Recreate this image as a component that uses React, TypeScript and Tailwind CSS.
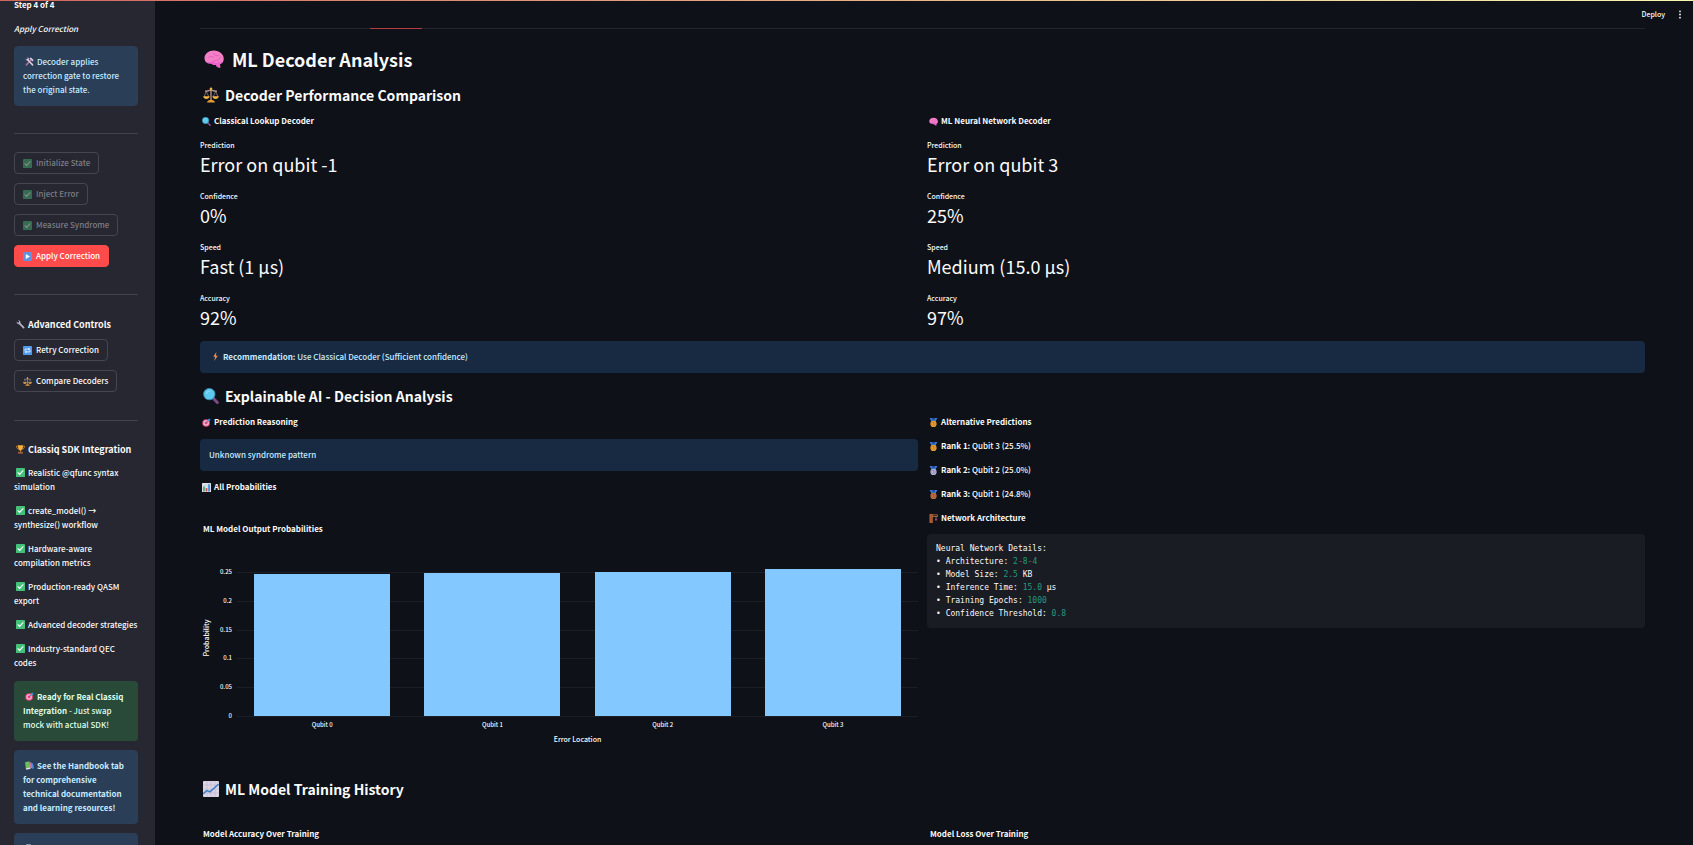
import React from 'react';

type IconName =
  | 'brain' | 'scales' | 'search' | 'target' | 'bars' | 'trend' | 'gold' | 'silver' | 'bronze'
  | 'crane' | 'bolt' | 'tools' | 'check' | 'play' | 'retry' | 'wrench' | 'trophy' | 'books' | 'file';

const medal = (fill: string, dark: string) => (
  <>
    <path d="M1 0h5l2 3 2-3h5l-4 7H5z" fill="#3b78d8" />
    <path d="M5 0h6L9 5H7z" fill="#1e4fa3" />
    <circle cx="8" cy="10.5" r="5.5" fill={fill} />
    <circle cx="8" cy="10.5" r="3.6" fill="none" stroke={dark} />
    <path d="M7 9l1.4-1v5" fill="none" stroke={dark} strokeWidth="1.2" />
  </>
);

const drawings: Record<IconName, React.ReactNode> = {
  brain: (
    <>
      <path d="M.4 7.600C.2 4 3.800 1.200 8 1.200c4.400 0 7.800 3 7.800 6.600 0 2.600-1.400 4-3 4.300l.2 2.900-2.600-.6-.8-1.800c-1.600.4-3 0-3.800-1C2.600 12 .6 10.600.4 7.600z" fill="#f57fc6" />
      <path d="M1.600 9.500c1.800 1.400 3.600 1.200 5 .4 2 1.200 5 1.200 8.200-.2-.5 1.500-1.400 2.200-2 2.400l.2 2.900-2.600-.6-.8-1.800c-1.600.4-3 0-3.800-1-1.800.1-3.600-.6-4.200-2.100z" fill="#ee62d2" />
      <path d="M3.500 7c1.500-1.600 3-1.400 4.200-.2M8 3.500c.4 1.700 2 2.400 3.600 1.700M7 10.500c.8-1.600 2.600-2 4.400-1.200M13.200 6.500c-.8.2-1.400 1-1.200 2" fill="none" stroke="#dc58b4" strokeWidth=".7" strokeLinecap="round" />
    </>
  ),
  scales: (
    <>
      <path d="M8 1v12M2 4.200C4 4.600 6 3.600 8 3c2 .6 4 1.600 6 1.200" fill="none" stroke="#b89a86" strokeWidth="1.300" />
      <path d="M3.200 4.500L1 10M3.200 4.500L6 10M12.800 4.500L10 10M12.800 4.500L15 10" stroke="#a08b90" strokeWidth=".7" />
      <path d="M.2 9.300h6.400C6.200 13 .6 13 .2 9.300zM9.400 9.300h6.400c-.4 3.700-6 3.700-6.400 0z" fill="#f5b445" />
      <path d="M4 15.500c.4-1.900 2-2.700 4-2.700s3.600.8 4 2.700z" fill="#e59a35" />
      <circle cx="8" cy="1.800" r="1.300" fill="#f5b445" />
    </>
  ),
  search: (
    <>
      <path d="M10.300 10.300l4 4.200" stroke="#7d4a86" strokeWidth="3" strokeLinecap="round" />
      <circle cx="6.300" cy="6.100" r="5.700" fill="#5cc8ee" stroke="#3b8fb3" strokeWidth=".8" />
      <path d="M3.500 5.500C4 3.800 5.300 3 7 3" stroke="#8fdcf8" strokeWidth="1.200" fill="none" strokeLinecap="round" />
    </>
  ),
  target: (
    <>
      <circle cx="7.300" cy="8.800" r="6.800" fill="#e8457c" />
      <circle cx="7.300" cy="8.800" r="4.700" fill="#f6d3e2" />
      <circle cx="7.300" cy="8.800" r="2.900" fill="#e8457c" />
      <path d="M7.500 8.500L13 3" stroke="#2f6fc4" strokeWidth="1.400" />
      <path d="M10.500 3L13 .5l.6 2 2 .6L13 5.600l-2.200-.4z" fill="#3f9bea" />
    </>
  ),
  bars: (
    <>
      <rect x="0" y="0" width="16" height="16" rx="1" fill="#dfe3ee" />
      <path d="M0 5.300h16M0 10.600h16M5.300 0v16M10.600 0v16" stroke="#b9bfd0" strokeWidth=".6" />
      <path d="M2 6h3v9H2z" fill="#35b26b" />
      <path d="M6.500 9h3v6h-3z" fill="#e0455a" />
      <path d="M11 2h3v13h-3z" fill="#3f86e0" />
    </>
  ),
  trend: (
    <>
      <rect x="0" y="0" width="16" height="16" rx="1" fill="#dcd5e6" />
      <path d="M0 4h16M0 8h16M0 12h16M4 0v16M8 0v16M12 0v16" stroke="#b8aecb" strokeWidth=".5" />
      <path d="M0 13l3.600-3.400 3.400 1.200L15.600 3" fill="none" stroke="#3f80c8" strokeWidth="1.600" />
    </>
  ),
  gold: medal('#f5a83c', '#b86a17'),
  silver: medal('#c3bfe0', '#77719d'),
  bronze: medal('#cf7a4d', '#8a4222'),
  crane: (
    <>
      <path d="M1 1h5v15H1z" fill="#7a4330" />
      <path d="M2 16V1h4v15M2 4l4 4-4 4 4 4M6 4L2 8l4 4-4 4" fill="none" stroke="#c8703c" strokeWidth="1.100" />
      <path d="M1 1.500h14v3H6" fill="none" stroke="#d9803f" strokeWidth="1.300" />
      <path d="M12.500 4.500v4" stroke="#b9aab4" />
      <path d="M10.500 8.500h4v3h-4z" fill="#a8485a" />
    </>
  ),
  bolt: <path d="M9.500 0L4 8.600h3.400L5.600 16 12.200 6.600H8.800z" fill="#f58a42" />,
  tools: (
    <>
      <path d="M2.500 14L11 4.500" stroke="#a9718f" strokeWidth="3" strokeLinecap="round" />
      <path d="M7.500 2.200L10.500.8l5 4.600-2.300 2.400z" fill="#cfc6d8" />
      <path d="M4.500 4.500L13.500 14" stroke="#d8cfe2" strokeWidth="2.600" strokeLinecap="round" />
      <path d="M1 2.500L3 4.600 5 4 5 1.500 3.200.6C5.500 0 7.500 2 6.800 4.800 5.500 7.200 1.500 6.500 1 2.500z" fill="#d8cfe2" />
    </>
  ),
  check: (
    <>
      <rect x="0" y="0" width="16" height="16" rx="1.500" fill="#45c07a" />
      <path d="M3.500 8.300l3 3.100 6-6.600" fill="none" stroke="#fff" strokeWidth="1.900" strokeLinecap="round" />
    </>
  ),
  play: (
    <>
      <rect x="0" y="0" width="16" height="16" rx="1.500" fill="#5f93e0" />
      <path d="M5 3.500v9L12.500 8z" fill="#fff" />
    </>
  ),
  retry: (
    <>
      <rect x="0" y="0" width="16" height="16" rx="1.500" fill="#4f9bf0" />
      <path d="M3.500 8.500V5.500H11M12.500 7.500v3H5" fill="none" stroke="#fff" strokeWidth="1.300" />
      <path d="M10 3l3 2.500L10 8zM6 8l-3 2.500L6 13z" fill="#fff" />
    </>
  ),
  wrench: (
    <>
      <path d="M6 6l7.600 7.600" stroke="#b9b4c6" strokeWidth="3" strokeLinecap="round" />
      <path d="M1 2.500L3.600 5 5.400 4.200 5.600 2.400 3.300.4C6 0 8.600 2 8 5.400 6.600 8.800 1.200 8 1 2.500z" fill="#b9b4c6" />
    </>
  ),
  trophy: (
    <>
      <path d="M3.500 2H1c0 3.500 1.200 5 4 5.500M12.500 2H15c0 3.500-1.200 5-4 5.500" fill="none" stroke="#e59a35" strokeWidth="1.300" />
      <path d="M3.500.5h9c0 5-.8 8.500-4.500 9.500C4.300 9 3.500 5.500 3.500.5z" fill="#f7b03c" />
      <path d="M7 9.500h2V12H7z" fill="#e59a35" />
      <path d="M3.500 12h9v3.500h-9z" fill="#9a5a3a" />
    </>
  ),
  books: (
    <>
      <path d="M0 2l8-1.500L9.500 12 1.500 13.500z" fill="#6bbf5c" />
      <path d="M8 3l3.500-.8 1.500 10-3.500 1z" fill="#d6709a" />
      <path d="M11.500 4.500l2.500-.6L16 13l-3 1z" fill="#4a8fe0" />
      <path d="M1.500 13l8-1.500.5 2.300-7.500 1.700z" fill="#e6e0ee" />
    </>
  ),
  file: <path d="M2 1h8l4 4v10H2z" fill="#e6e6f0" />,
};

// Emoji-style pictogram, sized by the caller
const Icon: React.FC<{ name: IconName; className?: string }> = ({ name, className = 'w-[9px] h-[9px] ml-[2px] mr-[3px]' }) => (
  <svg viewBox="0 0 16 16" aria-hidden="true" className={`inline-block shrink-0 align-[-1px] ${className}`}>
    {drawings[name]}
  </svg>
);

const SidebarButton: React.FC<{ icon: IconName; label: string; state?: 'normal' | 'disabled' | 'primary' }> = ({
  icon,
  label,
  state = 'normal',
}) => {
  const styles = {
    normal: 'border-[#45464f] text-[#fafafa]',
    disabled: 'border-[#45464f] text-[#7d7e85]',
    primary: 'border-[#ff4b4b] bg-[#ff4b4b] text-white',
  };
  return (
    <button
      type="button"
      disabled={state === 'disabled'}
      className={`flex h-[22px] items-center rounded border px-2 text-[8px] leading-[14px] font-medium ${styles[state]}`}
    >
      <Icon name={icon} className={`w-[9px] h-[9px] mr-[4px] ${state === 'disabled' ? 'opacity-45' : ''}`} />
      {label}
    </button>
  );
};

const sdkFeatures = [
  'Realistic @qfunc syntax\nsimulation',
  'create_model() →\nsynthesize() workflow',
  'Hardware-aware\ncompilation metrics',
  'Production-ready QASM\nexport',
  'Advanced decoder strategies',
  'Industry-standard QEC\ncodes',
];

const Sidebar: React.FC = () => (
  <aside className="w-[155px] shrink-0 overflow-hidden bg-[#262730] pl-[14px] pr-[17px] text-[8px] leading-[14px] font-medium text-[#fafafa]">
    <p className="mt-[-2px] font-bold">Step 4 of 4</p>
    <p className="mt-[10px] italic">Apply Correction</p>
    <div className="mt-[10px] rounded bg-[#2a3e58] px-[9px] py-[9px] text-[#c7ebff]">
      <Icon name="tools" />
      Decoder applies correction gate to restore the original state.
    </div>

    <hr className="mt-[27px] border-[#41424b]" />
    <div className="mt-[18px] flex flex-col items-start gap-[9px]">
      <SidebarButton icon="check" label="Initialize State" state="disabled" />
      <SidebarButton icon="check" label="Inject Error" state="disabled" />
      <SidebarButton icon="check" label="Measure Syndrome" state="disabled" />
      <SidebarButton icon="play" label="Apply Correction" state="primary" />
    </div>

    <hr className="mt-[27px] border-[#41424b]" />
    <h3 className="mt-[22px] text-[9px] leading-[16px] font-bold">
      <Icon name="wrench" />
      Advanced Controls
    </h3>
    <div className="mt-[6px] flex flex-col items-start gap-[9px]">
      <SidebarButton icon="retry" label="Retry Correction" />
      <SidebarButton icon="scales" label="Compare Decoders" />
    </div>

    <hr className="mt-[28px] border-[#41424b]" />
    <h3 className="mt-[21px] text-[9px] leading-[16px] font-bold whitespace-nowrap">
      <Icon name="trophy" />
      Classiq SDK Integration
    </h3>
    <ul className="mt-[8px] flex flex-col gap-[10px]">
      {sdkFeatures.map((feature) => (
        <li key={feature} className="whitespace-pre">
          <Icon name="check" />
          {feature}
        </li>
      ))}
    </ul>

    <div className="mt-[11px] rounded bg-[#294a39] px-[9px] py-[9px] text-[#dffde9]">
      <Icon name="target" />
      <strong>Ready for Real Classiq Integration</strong> - Just swap mock with actual SDK!
    </div>
    <div className="mt-[9px] rounded bg-[#2a3e58] px-[9px] py-[9px] font-bold text-[#c7ebff]">
      <Icon name="books" />
      See the Handbook tab for comprehensive technical documentation and learning resources!
    </div>
    <div className="mt-[9px] rounded bg-[#2a3e58] px-[9px] py-[9px] text-[#c7ebff]">
      <Icon name="file" />
      Open Handbook
    </div>
  </aside>
);

const SectionTitle: React.FC<{ icon: IconName; children: React.ReactNode }> = ({ icon, children }) => (
  <h3 className="flex items-center text-[14px] leading-[20px] font-semibold">
    <Icon name={icon} className="w-4 h-4 ml-[3px] mr-[6px]" />
    {children}
  </h3>
);

const Label: React.FC<{ icon: IconName; children: React.ReactNode }> = ({ icon, children }) => (
  <p className="flex items-center text-[8px] leading-[14px] font-bold">
    <Icon name={icon} />
    {children}
  </p>
);

const Metric: React.FC<{ label: string; value: string }> = ({ label, value }) => (
  <div>
    <dt className="text-[7px] leading-[13px] font-medium">{label}</dt>
    <dd className="text-[18px] leading-[24px]">{value}</dd>
  </div>
);

const decoders: { icon: IconName; name: string; metrics: [string, string][] }[] = [
  {
    icon: 'search',
    name: 'Classical Lookup Decoder',
    metrics: [['Prediction', 'Error on qubit -1'], ['Confidence', '0%'], ['Speed', 'Fast (1 μs)'], ['Accuracy', '92%']],
  },
  {
    icon: 'brain',
    name: 'ML Neural Network Decoder',
    metrics: [['Prediction', 'Error on qubit 3'], ['Confidence', '25%'], ['Speed', 'Medium (15.0 μs)'], ['Accuracy', '97%']],
  },
];

const probabilities = [
  { name: 'Qubit 0', value: 0.247 },
  { name: 'Qubit 1', value: 0.248 },
  { name: 'Qubit 2', value: 0.25 },
  { name: 'Qubit 3', value: 0.255 },
];
const ticks = ['0.25', '0.2', '0.15', '0.1', '0.05', '0'];

const ProbabilityChart: React.FC = () => (
  <figure className="mt-[28px] font-medium">
    <figcaption className="pl-[3px] text-[8px] leading-[14px] font-bold">ML Model Output Probabilities</figcaption>
    <div className="mt-[36px] flex h-[144px]">
      <div className="mb-3 flex w-[11px] items-center justify-center">
        <span className="-rotate-90 text-[7px] leading-[12px]">Probability</span>
      </div>
      <div className="-my-[6px] flex w-[21px] flex-col justify-between text-right text-[6px] leading-[12px]">
        {ticks.map((tick) => (
          <span key={tick}>{tick}</span>
        ))}
      </div>
      <div className="relative ml-[5px] flex-1">
        <div className="flex h-[145px] flex-col justify-between">
          {ticks.map((tick) => (
            <div key={tick} className="h-px bg-[#1b1e25]" />
          ))}
        </div>
        <div className="absolute inset-0 flex items-end justify-around">
          {probabilities.map(({ name, value }) => (
            <div key={name} className="w-1/5 bg-[#83c9ff]" style={{ height: `${(value / 0.25) * 100}%` }} />
          ))}
        </div>
      </div>
    </div>
    <div className="mt-[3px] ml-[37px] text-center leading-[12px]">
      <div className="flex justify-around text-[6px]">
        {probabilities.map(({ name }) => (
          <span key={name} className="w-1/5">{name}</span>
        ))}
      </div>
      <p className="mt-[2px] text-[7px]">Error Location</p>
    </div>
  </figure>
);

const ranks: { icon: IconName; rank: string; text: string }[] = [
  { icon: 'gold', rank: 'Rank 1:', text: 'Qubit 3 (25.5%)' },
  { icon: 'silver', rank: 'Rank 2:', text: 'Qubit 2 (25.0%)' },
  { icon: 'bronze', rank: 'Rank 3:', text: 'Qubit 1 (24.8%)' },
];

const Num: React.FC<{ children: React.ReactNode }> = ({ children }) => <span className="text-[#239a7e]">{children}</span>;
const Op: React.FC<{ children: React.ReactNode }> = ({ children }) => <span className="text-[#a8584c]">{children}</span>;

const App: React.FC = () => {
  return (
    <div className="relative flex h-screen overflow-hidden bg-[#0e1117] font-['Noto_Sans_CJK_SC',sans-serif] text-[#fafafa]">
      <div className="absolute inset-x-0 top-0 h-px bg-linear-to-r from-[#d0665e] to-[#f8f8b0]" />
      <Sidebar />

      <div className="min-w-0 flex-1">
        <header className="flex h-[28px] items-center justify-end gap-[13px] pr-[11px] text-[7px] font-medium">
          <button type="button">Deploy</button>
          <button type="button" aria-label="Main menu">
            <svg viewBox="0 0 4 10" className="h-[9px] w-[4px]" fill="#fafafa">
              <circle cx="2" cy="1.500" r="1" />
              <circle cx="2" cy="5" r="1" />
              <circle cx="2" cy="8.500" r="1" />
            </svg>
          </button>
        </header>

        <main className="pl-[45px] pr-[48px]">
          <div className="h-px bg-[#22252d]">
            <div className="ml-[170px] h-px w-[52px] bg-[#b53c40]" />
          </div>

          <h2 className="mt-[18px] flex items-center text-[18px] leading-[24px] font-semibold">
            <Icon name="brain" className="w-5 h-5 ml-[4px] mr-[8px]" />
            ML Decoder Analysis
          </h2>
          <div className="mt-[14px]">
            <SectionTitle icon="scales">Decoder Performance Comparison</SectionTitle>
          </div>

          <div className="mt-[9px] grid grid-cols-2 gap-[9px]">
            {decoders.map((decoder) => (
              <section key={decoder.name}>
                <Label icon={decoder.icon}>{decoder.name}</Label>
                <dl className="mt-[11px] flex flex-col gap-[14px]">
                  {decoder.metrics.map(([label, value]) => (
                    <Metric key={label} label={label} value={value} />
                  ))}
                </dl>
              </section>
            ))}
          </div>

          <div className="mt-[12px] rounded bg-[#172a42] px-[9px] py-[9px] text-[8px] leading-[14px] font-medium text-[#c7ebff]">
            <Icon name="bolt" />
            <strong>Recommendation:</strong> Use Classical Decoder (Sufficient confidence)
          </div>

          <div className="mt-[13px]">
            <SectionTitle icon="search">Explainable AI - Decision Analysis</SectionTitle>
          </div>

          <div className="mt-[9px] grid grid-cols-2 gap-[9px]">
            <section>
              <Label icon="target">Prediction Reasoning</Label>
              <div className="mt-[10px] mb-[9px] rounded bg-[#172a42] px-[9px] py-[9px] text-[8px] leading-[14px] font-medium text-[#c7ebff]">
                Unknown syndrome pattern
              </div>
              <Label icon="bars">All Probabilities</Label>
              <ProbabilityChart />
            </section>

            <section>
              <Label icon="gold">Alternative Predictions</Label>
              <ul className="my-[10px] flex flex-col gap-[10px] text-[8px] leading-[14px] font-medium">
                {ranks.map(({ icon, rank, text }) => (
                  <li key={rank} className="flex items-center">
                    <Icon name={icon} />
                    <span><strong>{rank}</strong> {text}</span>
                  </li>
                ))}
              </ul>
              <Label icon="crane">Network Architecture</Label>
              <pre className="mt-[9px] rounded bg-[#1a1c24] p-2 pl-[9px] font-['DejaVu_Sans_Mono',monospace] text-[8px] leading-[13px]">
                Neural Network Details:{'\n'}
                • Architecture: <Num>2</Num><Op>-</Op><Num>8</Num><Op>-</Op><Num>4</Num>{'\n'}
                • Model Size: <Num>2.5</Num> KB{'\n'}
                • Inference Time: <Num>15.0</Num> μs{'\n'}
                • Training Epochs: <Num>1000</Num>{'\n'}
                • Confidence Threshold: <Num>0.8</Num>
              </pre>
            </section>
          </div>

          <div className="mt-[34px]">
            <SectionTitle icon="trend">ML Model Training History</SectionTitle>
          </div>
          <div className="mt-[28px] grid grid-cols-2 gap-[9px] text-[8px] leading-[14px] font-bold">
            <p className="pl-[3px]">Model Accuracy Over Training</p>
            <p className="pl-[3px]">Model Loss Over Training</p>
          </div>
        </main>
      </div>
    </div>
  );
};

export default App;
